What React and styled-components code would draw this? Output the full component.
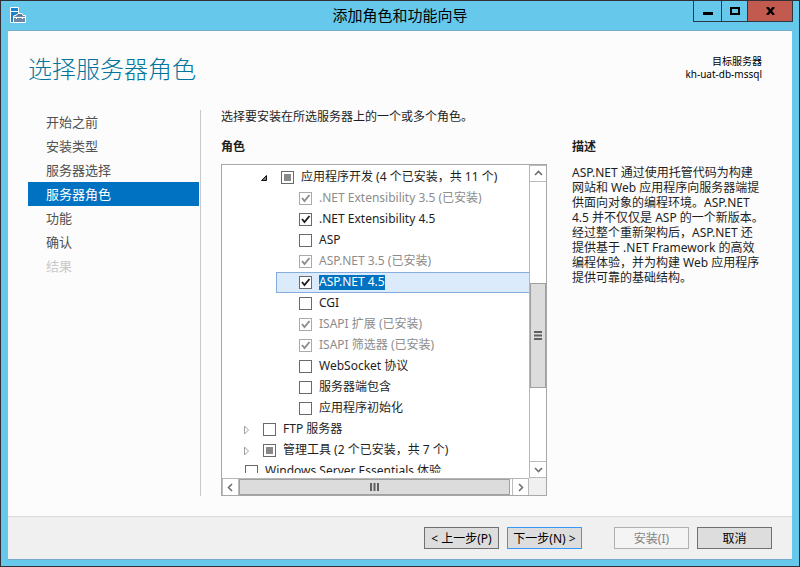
import React, { useState } from "react";
import styled, { createGlobalStyle, css } from "styled-components";

const GlobalStyle = createGlobalStyle`
  *, *::before, *::after { box-sizing: border-box; }
  body { margin: 0; }
  body, button, input {
    font-family: "Noto Sans", "Noto Sans CJK SC", sans-serif;
    font-size: 12px;
    line-height: 15px;
    color: #1e1e1e;
  }
  button { margin: 0; padding: 0; }
`;

const Window = styled.div`
  display: flex;
  flex-direction: column;
  min-height: 100vh;
  padding: 0 7px 6px;
  border: 1px solid #332f36;
  background: #66c9eb;
`;

const TitleBar = styled.header`
  display: grid;
  grid-template-columns: 1fr auto 1fr;
  height: 29px;
`;

const AppIcon = styled.svg`
  width: 16px;
  height: 16px;
  margin: 6px 0 0 2px;
`;

const WindowTitle = styled.span`
  padding-top: 4px;
  color: #000;
  font-size: 15px;
  line-height: 20px;
`;

const WindowControls = styled.div`
  display: flex;
  justify-content: flex-end;
  height: 21px;
  margin-right: -1px;
`;

const ControlButton = styled.button`
  display: flex;
  align-items: center;
  justify-content: center;
  width: ${(p) => p.$width}px;
  border: 1px solid #283a42;
  border-top: 0;
  border-right-width: ${(p) => (p.$close ? 1 : 0)}px;
  background: ${(p) => (p.$close ? "#c35a50" : "transparent")};
`;

const Client = styled.main`
  flex: 1;
  display: flex;
  flex-direction: column;
  border: solid #76abc9;
  border-width: 1px 0;
  background: #fcfcfc;
`;

const Heading = styled.div`
  display: flex;
  justify-content: space-between;
  height: 79px;
  padding: 22px 30px 0 20px;
`;

const Title = styled.h1`
  margin: 0;
  color: #00749c;
  font-size: 24px;
  font-weight: 300;
  line-height: 32px;
`;

const Target = styled.div`
  padding-top: 2px;
  color: #000;
  font-size: 10px;
  line-height: 13px;
  text-align: right;
`;

const Body = styled.div`
  flex: 1;
  display: flex;
  padding: 0 25px 20px 20px;
`;

const Nav = styled.nav`
  flex: 0 0 173px;
  padding-right: 1px;
  border-right: 1px solid #c8c8c8;
`;

const NavLink = styled.a`
  display: block;
  padding-left: 18px;
  font-size: 13px;
  line-height: 24px;
  text-decoration: none;
  color: ${(p) => (p.$state === "current" ? "#fff" : p.$state === "disabled" ? "#c8c8c8" : "#505050")};
  background: ${(p) => (p.$state === "current" ? "#0072c2" : "transparent")};
`;

const Roles = styled.section`
  flex: 1 1 326px;
  display: flex;
  flex-direction: column;
  margin-left: 20px;
`;

const Intro = styled.p`
  margin: 0 0 15px;
  line-height: 14px;
`;

const Label = styled.h2`
  margin: 0;
  font-size: 12px;
  font-weight: 700;
  line-height: 15px;
`;

const Description = styled.section`
  flex: 0 0 195px;
  margin-left: 25px;
  padding-top: 29px;
`;

const DescriptionText = styled.p`
  margin: 11px 0 0;
  white-space: pre-line;
`;

const TreeBox = styled.div`
  flex: 1;
  display: grid;
  grid-template-columns: 1fr 17px;
  grid-template-rows: 1fr 17px;
  margin-top: 10px;
  border: 1px solid #a5a7aa;
  background: #fff;
`;

const TreeView = styled.div`
  height: 0;
  min-height: calc(100% - 5px);
  padding-top: 2px;
  overflow: hidden;
`;

const TreeRow = styled.div`
  display: flex;
  align-items: center;
  height: 21px;
  margin-left: ${(p) => p.$level * 18}px;
  border: 1px solid transparent;
  border-right: 0;
  white-space: nowrap;
  ${(p) =>
    p.$selected &&
    css`
      border-color: #84acdd;
      background: #dcebfc;
    `}
`;

const Expander = styled.button`
  display: flex;
  justify-content: center;
  width: 12px;
  height: 12px;
  margin-right: 10px;
  border: 0;
  background: none;
`;

const ExpanderSpace = styled.span`
  width: 22px;
`;

const Choice = styled.label`
  display: flex;
  align-items: center;
  gap: 7px;
  color: ${(p) => (p.$disabled ? "#8c8c8c" : "#1e1e1e")};
`;

const CheckFrame = styled.span`
  display: grid;
  width: 13px;
  height: 13px;

  & > * {
    grid-area: 1 / 1;
  }
`;

const CheckInput = styled.input`
  appearance: none;
  width: 13px;
  height: 13px;
  margin: 0;
  border: 1px solid #6a6a6a;
  background: #fff;

  &:disabled {
    border-color: #aaa;
  }
`;

const CheckMark = styled.svg`
  width: 13px;
  height: 13px;
  pointer-events: none;
`;

const ChoiceText = styled.span`
  height: 15px;
  line-height: 13px;
  ${(p) =>
    p.$selected &&
    css`
      color: #fff;
      background: #0072c2;
    `}
`;

const Scrollbar = styled.div`
  display: flex;
  flex-direction: ${(p) => (p.$vertical ? "column" : "row")};
  border: 0 solid #b4b6b8;
  border-width: ${(p) => (p.$vertical ? "0 0 0 1px" : "1px 0 0")};
`;

const ScrollArrow = styled.button`
  display: flex;
  align-items: center;
  justify-content: center;
  flex: 0 0 17px;
  border: 1px solid #b9bbbd;
  border-width: ${(p) => (p.$vertical ? "1px 0" : "0 1px")};
  background: #fff;
`;

const Track = styled.span`
  flex: ${(p) => p.$part} 1 0;
`;

const Thumb = styled.span`
  display: flex;
  align-items: center;
  justify-content: center;
  flex: ${(p) => p.$part} 1 0;
  border: 1px solid #a0a0a0;
  background: #dcdcdc;
`;

const Corner = styled.div`
  background: #f0f0f0;
`;

const Footer = styled.footer`
  display: flex;
  justify-content: flex-end;
  gap: 8px;
  height: 43px;
  padding: 10px 20px 0;
  border-top: 1px solid #dadada;
  background: #f0f0f0;
`;

const ActionButton = styled.button`
  width: 75px;
  height: 22px;
  margin-left: ${(p) => (p.$separated ? 24 : 0)}px;
  border: 1px solid ${(p) => (p.$primary ? "#3399ff" : "#707070")};
  background: #dddddd;
  color: #000;
  white-space: nowrap;

  &:disabled {
    border-color: #adb2b5;
    background: #f4f4f4;
    color: #838383;
  }
`;

const steps = [
  ["开始之前"],
  ["安装类型"],
  ["服务器选择"],
  ["服务器角色", "current"],
  ["功能"],
  ["确认"],
  ["结果", "disabled"],
];

const roles = [
  { level: 2, mark: "partial", expander: "open", text: "应用程序开发 (4 个已安装，共 11 个)" },
  { level: 3, mark: "check", disabled: true, text: ".NET Extensibility 3.5 (已安装)" },
  { level: 3, mark: "check", text: ".NET Extensibility 4.5" },
  { level: 3, text: "ASP" },
  { level: 3, mark: "check", disabled: true, text: "ASP.NET 3.5 (已安装)" },
  { level: 3, mark: "check", selected: true, text: "ASP.NET 4.5" },
  { level: 3, text: "CGI" },
  { level: 3, mark: "check", disabled: true, text: "ISAPI 扩展 (已安装)" },
  { level: 3, mark: "check", disabled: true, text: "ISAPI 筛选器 (已安装)" },
  { level: 3, text: "WebSocket 协议" },
  { level: 3, text: "服务器端包含" },
  { level: 3, text: "应用程序初始化" },
  { level: 1, expander: "closed", text: "FTP 服务器" },
  { level: 1, mark: "partial", expander: "closed", text: "管理工具 (2 个已安装，共 7 个)" },
  { level: 0, text: "Windows Server Essentials 体验" },
];

const description = [
  "ASP.NET 通过使用托管代码为构建",
  "网站和 Web 应用程序向服务器端提",
  "供面向对象的编程环境。ASP.NET",
  "4.5 并不仅仅是 ASP 的一个新版本。",
  "经过整个重新架构后，ASP.NET 还",
  "提供基于 .NET Framework 的高效",
  "编程体验，并为构建 Web 应用程序",
  "提供可靠的基础结构。",
].join("\n");

const arrows = {
  up: "M1 6 L4.5 2.5 L8 6",
  down: "M1 3 L4.5 6.5 L8 3",
  left: "M6 1 L2.5 4.5 L6 8",
  right: "M3 1 L6.5 4.5 L3 8",
};

function Arrow({ direction }) {
  return (
    <svg width="9" height="9" viewBox="0 0 9 9">
      <path d={arrows[direction]} fill="none" stroke="#707070" strokeWidth="1.6" />
    </svg>
  );
}

function ExpanderGlyph({ state }) {
  return state === "open" ? (
    <svg width="12" height="12" viewBox="0 0 12 12">
      <path d="M7.5 3.5 V8.5 H2.5 Z" fill="#777" stroke="#111" />
    </svg>
  ) : (
    <svg width="12" height="12" viewBox="0 0 12 12">
      <path d="M3.5 2 V10 L7.5 6 Z" fill="#fff" stroke="#a0a0a0" />
    </svg>
  );
}

function RoleRow({ role }) {
  const [mark, setMark] = useState(role.mark);
  return (
    <TreeRow $level={role.level} $selected={role.selected}>
      {role.expander ? (
        <Expander type="button" aria-label={role.text} aria-expanded={role.expander === "open"}>
          <ExpanderGlyph state={role.expander} />
        </Expander>
      ) : (
        <ExpanderSpace />
      )}
      <Choice $disabled={role.disabled}>
        <CheckFrame>
          <CheckInput
            type="checkbox"
            disabled={role.disabled}
            checked={mark === "check"}
            ref={(el) => {
              if (el) el.indeterminate = mark === "partial";
            }}
            onChange={() => setMark(mark === "check" ? undefined : "check")}
          />
          <CheckMark viewBox="0 0 13 13" aria-hidden="true">
            {mark === "partial" && <rect x="3" y="3" width="7" height="7" fill="#888" />}
            {mark === "check" && (
              <path
                d="M3 6 L5.5 9 L10.5 3"
                fill="none"
                stroke={role.disabled ? "#8c8c8c" : "#1e1e1e"}
                strokeWidth="1.9"
              />
            )}
          </CheckMark>
        </CheckFrame>
        <ChoiceText $selected={role.selected}>{role.text}</ChoiceText>
      </Choice>
    </TreeRow>
  );
}

export default function App() {
  return (
    <>
      <GlobalStyle />
      <Window>
        <TitleBar>
          <AppIcon viewBox="0 0 16 16" aria-hidden="true">
            <path d="M0.5 0.5 H8.5 V7 L4 9 V15.5 H0.5 Z" fill="#1784d0" stroke="#fff" />
            <path d="M1 4.5 H8.5" stroke="#fff" />
            <path d="M3.5 15.5 V9 L6 8.5 L8 6.5 H12 L13 8.5 H15.5 V15.5 Z" fill="#6f87a5" stroke="#fff" />
            <path d="M8 8.5 V8 H11.5 V8.5" fill="none" stroke="#4c6888" />
            <path d="M4 10.5 H15 M6.5 10 V12 M12.5 10 V12" stroke="#fff" />
          </AppIcon>
          <WindowTitle>添加角色和功能向导</WindowTitle>
          <WindowControls>
            <ControlButton type="button" $width={28} aria-label="最小化">
              <svg width="10" height="10" viewBox="0 0 10 10">
                <path d="M0 7.5 H10" stroke="#000" strokeWidth="3" />
              </svg>
            </ControlButton>
            <ControlButton type="button" $width={26} aria-label="最大化">
              <svg width="10" height="8" viewBox="0 0 10 8">
                <rect x="1" y="1" width="8" height="6" fill="none" stroke="#000" strokeWidth="2" />
              </svg>
            </ControlButton>
            <ControlButton type="button" $width={46} $close aria-label="关闭">
              <svg width="9" height="8" viewBox="0 0 9 8">
                <path d="M1 0 L8 8 M8 0 L1 8" stroke="#000" strokeWidth="2.4" />
              </svg>
            </ControlButton>
          </WindowControls>
        </TitleBar>

        <Client>
          <Heading>
            <Title>选择服务器角色</Title>
            <Target>
              <div>目标服务器</div>
              <div>kh-uat-db-mssql</div>
            </Target>
          </Heading>

          <Body>
            <Nav>
              {steps.map(([name, state]) => (
                <NavLink key={name} href="#" $state={state} aria-disabled={state === "disabled"}>
                  {name}
                </NavLink>
              ))}
            </Nav>

            <Roles>
              <Intro>选择要安装在所选服务器上的一个或多个角色。</Intro>
              <Label>角色</Label>
              <TreeBox>
                <TreeView>
                  {roles.map((role) => (
                    <RoleRow key={role.text} role={role} />
                  ))}
                </TreeView>
                <Scrollbar $vertical>
                  <ScrollArrow type="button" $vertical aria-label="向上滚动">
                    <Arrow direction="up" />
                  </ScrollArrow>
                  <Track $part={102} />
                  <Thumb $part={103}>
                    <svg width="8" height="9" viewBox="0 0 8 9">
                      <path d="M0 1 H8 M0 4.5 H8 M0 8 H8" stroke="#606060" strokeWidth="2" />
                    </svg>
                  </Thumb>
                  <Track $part={74} />
                  <ScrollArrow type="button" $vertical aria-label="向下滚动">
                    <Arrow direction="down" />
                  </ScrollArrow>
                </Scrollbar>
                <Scrollbar>
                  <ScrollArrow type="button" aria-label="向左滚动">
                    <Arrow direction="left" />
                  </ScrollArrow>
                  <Thumb $part={271}>
                    <svg width="9" height="8" viewBox="0 0 9 8">
                      <path d="M1 0 V8 M4.5 0 V8 M8 0 V8" stroke="#606060" strokeWidth="2" />
                    </svg>
                  </Thumb>
                  <Track $part={2} />
                  <ScrollArrow type="button" aria-label="向右滚动">
                    <Arrow direction="right" />
                  </ScrollArrow>
                </Scrollbar>
                <Corner />
              </TreeBox>
            </Roles>

            <Description>
              <Label>描述</Label>
              <DescriptionText>{description}</DescriptionText>
            </Description>
          </Body>

          <Footer>
            <ActionButton type="button">&lt; 上一步(P)</ActionButton>
            <ActionButton type="button" $primary>下一步(N) &gt;</ActionButton>
            <ActionButton type="button" $separated disabled>安装(I)</ActionButton>
            <ActionButton type="button">取消</ActionButton>
          </Footer>
        </Client>
      </Window>
    </>
  );
}
